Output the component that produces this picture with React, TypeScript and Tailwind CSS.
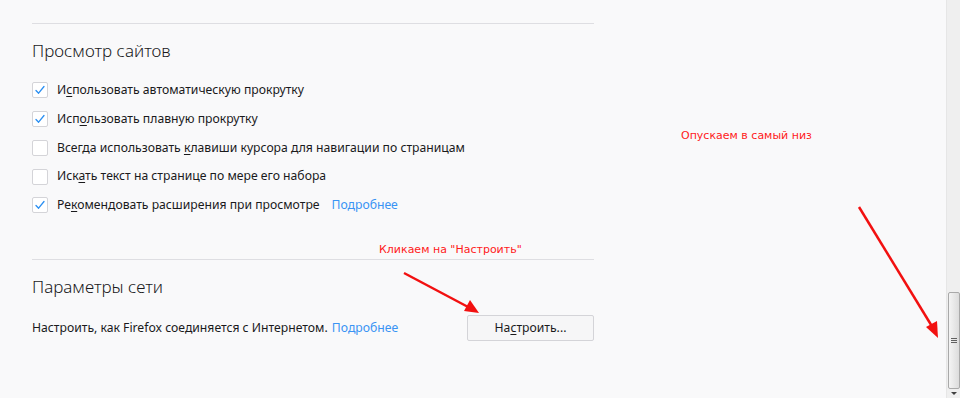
import React from "react";

const Check = () => (
  <svg width="12" height="12" viewBox="0 0 12 12" className="block">
    <path d="M2 6.5 L4.6 9.2 L10 2.5" fill="none" stroke="#2a8ff2" strokeWidth="1.3" strokeLinecap="round" strokeLinejoin="round" />
  </svg>
);

function Row({ checked, children }: { checked: boolean; children: React.ReactNode }) {
  return (
    <div className="flex h-[28.75px] items-center">
      <div className="flex h-[16px] w-[16px] items-center justify-center rounded-[2px] border border-[#d4d4d8] bg-white">
        {checked && <Check />}
      </div>
      <div className="ml-[9px] text-[12.2px] text-[#1a1a1c]">{children}</div>
    </div>
  );
}

const U = ({ children }: { children: React.ReactNode }) => (
  <span className="underline underline-offset-2">{children}</span>
);

export default function App() {
  return (
    <div
      className="relative flex h-[398px] w-[960px] overflow-hidden bg-[#f9f9fa]"
      style={{ fontFamily: '"Noto Sans", "Open Sans", sans-serif' }}
    >
      <div className="flex-1">
        <div className="ml-[32px] w-[562px] pt-[23px]">
          <div className="border-t border-[#dedee2]" />
          <div className="mt-[15px] h-[24px] text-[17px] font-light leading-[24px] text-[#1a1a1c]">
            Просмотр сайтов
          </div>
          <div className="mt-[13px]">
            <Row checked>
              И<U>с</U>пользовать автоматическую прокрутку
            </Row>
            <Row checked>
              Исп<U>о</U>льзовать плавную прокрутку
            </Row>
            <Row checked={false}>
              Всегда использовать <U>к</U>лавиши курсора для навигации по страницам
            </Row>
            <Row checked={false}>
              Иск<U>а</U>ть текст на странице по мере его набора
            </Row>
            <Row checked>
              Ре<U>к</U>омендовать расширения при просмотре
              <span className="ml-[12px] text-[#3a94f4]">Подробнее</span>
            </Row>
          </div>
          <div className="mt-[39px] border-t border-[#dedee2]" />
          <div className="mt-[15px] h-[24px] text-[17px] font-light leading-[24px] text-[#1a1a1c]">
            Параметры сети
          </div>
          <div className="mt-[16px] flex h-[26px] items-center justify-between">
            <div className="text-[12.2px] text-[#1a1a1c]">
              Настроить, как Firefox соединяется с Интернетом.{" "}
              <span className="ml-[1px] text-[#3a94f4]">Подробнее</span>
            </div>
            <div className="flex h-[26px] w-[127px] items-center justify-center rounded-[2px] border border-[#d4d4d8] bg-[#f6f6f7] text-[12.2px] text-[#1a1a1c]">
              На<U>с</U>троить...
            </div>
          </div>
        </div>
      </div>

      {/* scrollbar */}
      <div className="flex w-[14px] flex-col border-l border-[#e6e6e6] bg-[#efefef]">
        <div className="h-[292px]" />
        <div className="mx-auto flex h-[97px] w-[12px] items-center justify-center rounded-[2px] border border-[#a9a9a9] bg-gradient-to-r from-[#f4f4f4] to-[#dcdcdc]">
          <div className="flex flex-col gap-[1px]">
            <div className="h-[1px] w-[6px] bg-[#606060]" />
            <div className="h-[1px] w-[6px] bg-[#606060]" />
            <div className="h-[1px] w-[6px] bg-[#606060]" />
          </div>
        </div>
        <div className="flex flex-1 items-center justify-center">
          <div className="h-0 w-0 border-x-[3px] border-t-[3px] border-x-transparent border-t-[#404040]" />
        </div>
      </div>

      {/* annotations */}
      <div
        className="absolute left-[379px] top-[243px] text-[11px] leading-[14px] text-[#ff1a1a]"
        style={{ fontFamily: '"DejaVu Sans", Verdana, sans-serif' }}
      >
        Кликаем на "Настроить"
      </div>
      <div
        className="absolute left-[681px] top-[129px] text-[11px] leading-[14px] text-[#ff1a1a]"
        style={{ fontFamily: '"DejaVu Sans", Verdana, sans-serif' }}
      >
        Опускаем в самый низ
      </div>
      <svg className="pointer-events-none absolute left-0 top-0" width="960" height="398">
        <line x1="404" y1="273" x2="470" y2="308" stroke="#f21010" strokeWidth="2.5" />
        <polygon points="479,313 464,311 470,300" fill="#f21010" />
        <line x1="859" y1="207" x2="933" y2="328" stroke="#f21010" strokeWidth="2.5" />
        <polygon points="938,338 926,327 937,321" fill="#f21010" />
      </svg>
    </div>
  );
}
